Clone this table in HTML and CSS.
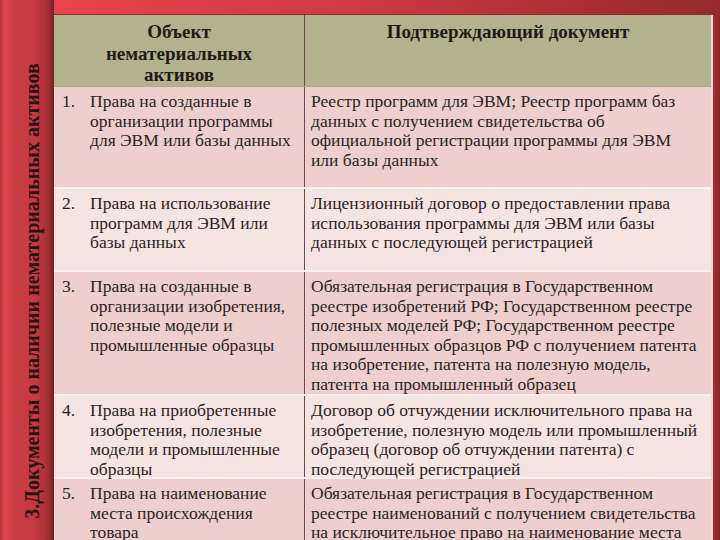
FILE: index.html
```html
<!DOCTYPE html>
<html lang="ru">
<head>
<meta charset="utf-8">
<title>Документы о наличии нематериальных активов</title>
<link rel="stylesheet" href="styles.css">
</head>
<body>
<div class="slide">
  <aside class="side">
    <div class="side-title">3.Документы о наличии нематериальных активов</div>
  </aside>
  <main class="main">
    <div class="topband"></div>
    <div class="body">
      <div class="table">
        <div class="row head">
          <div class="cell c1 hc">Объект<br>нематериальных<br>активов</div>
          <div class="cell c2 hc">Подтверждающий документ</div>
        </div>
        <div class="row pink r1">
          <div class="cell c1"><span class="num">1.</span><span class="txt">Права на созданные в<br>организации программы<br>для ЭВМ или базы данных</span></div>
          <div class="cell c2">Реестр программ для ЭВМ; Реестр программ баз<br>данных с получением свидетельства об<br>официальной регистрации программы для ЭВМ<br>или базы данных</div>
        </div>
        <div class="row light r2">
          <div class="cell c1"><span class="num">2.</span><span class="txt">Права на использование<br>программ для ЭВМ или<br>базы данных</span></div>
          <div class="cell c2">Лицензионный договор о предоставлении права<br>использования программы для ЭВМ или базы<br>данных с последующей регистрацией</div>
        </div>
        <div class="row pink r3">
          <div class="cell c1"><span class="num">3.</span><span class="txt">Права на созданные в<br>организации изобретения,<br>полезные модели и<br>промышленные образцы</span></div>
          <div class="cell c2">Обязательная регистрация в Государственном<br>реестре изобретений РФ; Государственном реестре<br>полезных моделей РФ; Государственном реестре<br>промышленных образцов РФ с получением патента<br>на изобретение, патента на полезную модель,<br>патента на промышленный образец</div>
        </div>
        <div class="row light r4">
          <div class="cell c1"><span class="num">4.</span><span class="txt">Права на приобретенные<br>изобретения, полезные<br>модели и промышленные<br>образцы</span></div>
          <div class="cell c2">Договор об отчуждении исключительного права на<br>изобретение, полезную модель или промышленный<br>образец (договор об отчуждении патента) с<br>последующей регистрацией</div>
        </div>
        <div class="row pink r5">
          <div class="cell c1"><span class="num">5.</span><span class="txt">Права на наименование<br>места происхождения<br>товара</span></div>
          <div class="cell c2">Обязательная регистрация в Государственном<br>реестре наименований с получением свидетельства<br>на исключительное право на наименование места<br>происхождения товара</div>
        </div>
      </div>
      <div class="rightband"></div>
    </div>
  </main>
</div>
</body>
</html>
```

FILE: styles.css
```css
html, body {
  margin: 0;
  padding: 0;
}
body {
  width: 720px;
  height: 540px;
  overflow: hidden;
  background: #f3e3e2;
  font-family: "Liberation Serif", "Times New Roman", serif;
  color: #2a1f1f;
}
.slide {
  display: flex;
  width: 720px;
  height: 540px;
  overflow: hidden;
}
.side {
  width: 52px;
  flex: none;
  height: 540px;
  border-right: 2px solid #7a2226;
  background: linear-gradient(90deg, #b3343a 0px, #e64a52 5px, #d4424a 9px, #c93c43 16px, #c53a41 34px, #b3333a 44px, #992a30 50px, #7d2429 52px);
  position: relative;
}
.side-title {
  position: absolute;
  left: 32px;
  top: 291px;
  transform: translate(-50%, -50%) rotate(-90deg);
  white-space: nowrap;
  font-family: "Liberation Serif", "Times New Roman", serif;
  font-weight: bold;
  font-size: 20px;
  color: #2a1212;
}
.main {
  flex: 1;
  display: flex;
  flex-direction: column;
  min-width: 0;
}
.topband {
  height: 14px;
  flex: none;
  background: linear-gradient(90deg, #e8444c 0%, #cf3a42 45%, #a92e33 80%, #962a2e 100%);
  border-bottom: 1px solid #8d2a2d;
}
.body {
  flex: 1;
  display: flex;
  min-height: 0;
}
.table {
  flex: 1;
  display: flex;
  flex-direction: column;
  min-width: 0;
  border-right: 2px solid #efd8d6;
}
.rightband {
  width: 7px;
  flex: none;
  background: linear-gradient(90deg, #a33035, #8a2629);
}
.row {
  display: flex;
  flex: none;
  border-bottom: 2px solid #fbf1f0;
}
.head {
  height: 71px;
  background: #b3b28f;
  border-bottom: 1px solid #a9a888;
}
.pink { background: #eecfce; }
.light { background: #f6e4e3; }
.r1 { height: 100px; }
.r2 { height: 81px; }
.r3 { height: 122px; }
.r4 { height: 81px; }
.r5 { height: 90px; border-bottom: none; }
.cell {
  box-sizing: border-box;
  white-space: nowrap;
  font-family: "Liberation Serif", "Times New Roman", serif;
  font-size: 17.5px;
  line-height: 19.5px;
}
.c1 {
  width: 251px;
  flex: none;
  display: flex;
  padding: 5px 0 0 8px;
  border-right: 1px solid #6a4a4a;
}
.c2 {
  flex: 1;
  padding: 5px 0 0 6px;
}
.num {
  width: 28px;
  flex: none;
}
.hc {
  display: block;
  text-align: center;
  font-weight: bold;
  font-size: 19px;
  line-height: 21.5px;
  padding: 6px 0 0 0;
  color: #1f1a14;
}
.c2.hc { padding-top: 6px; }
```
